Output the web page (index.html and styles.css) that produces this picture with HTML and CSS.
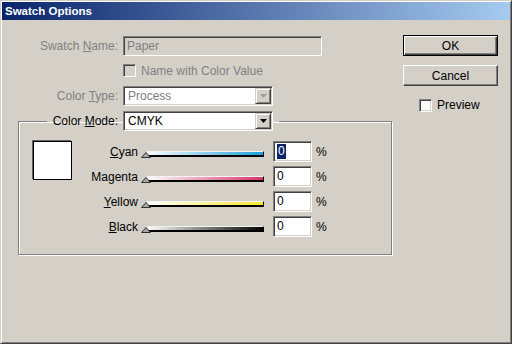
FILE: index.html
```html
<!DOCTYPE html>
<html>
<head>
<meta charset="utf-8">
<link rel="stylesheet" href="styles.css">
</head>
<body>
<div class="window">
  <div class="titlebar">Swatch Options</div>
  <div class="body">
    <div class="form">
      <div class="row r1">
        <label class="lbl dis">Swatch <u>N</u>ame:</label>
        <div class="textbox">Paper</div>
      </div>
      <div class="row r2">
        <span class="chk chk-dis"></span><span class="chk-text dis">Name with Color Value</span>
      </div>
      <div class="row r3">
        <label class="lbl dis">Color <u>T</u>ype:</label>
        <div class="select">
          <span class="val dis">Process</span>
          <span class="dd"><svg width="7" height="4" viewBox="0 0 7 4"><path d="M0 0h7L3.5 4z" fill="#a0a0a0"/></svg></span>
        </div>
      </div>
      <fieldset class="group">
        <legend class="legend">
          <label class="lgl">Color <u>M</u>ode:</label>
          <div class="select">
            <span class="val">CMYK</span>
            <span class="dd"><svg width="7" height="4" viewBox="0 0 7 4"><path d="M0 0h7L3.5 4z" fill="#000"/></svg></span>
          </div>
        </legend>
        <div class="group-body">
          <div class="swatch"></div>
          <div class="sliders">
            <div class="srow">
              <span class="slbl"><u>C</u>yan</span>
              <div class="slider"><div class="bar cyan"></div><svg class="thumb" width="10" height="6" viewBox="0 0 10 6"><path d="M0.5 5.5L5 0.5L9.5 5.5Z" fill="#a8a8a8" stroke="#303030"/></svg></div>
              <div class="num"><span class="sel">0</span></div>
              <span class="pct">%</span>
            </div>
            <div class="srow">
              <span class="slbl">Ma<u>g</u>enta</span>
              <div class="slider"><div class="bar magenta"></div><svg class="thumb" width="10" height="6" viewBox="0 0 10 6"><path d="M0.5 5.5L5 0.5L9.5 5.5Z" fill="#a8a8a8" stroke="#303030"/></svg></div>
              <div class="num">0</div>
              <span class="pct">%</span>
            </div>
            <div class="srow">
              <span class="slbl"><u>Y</u>ellow</span>
              <div class="slider"><div class="bar yellow"></div><svg class="thumb" width="10" height="6" viewBox="0 0 10 6"><path d="M0.5 5.5L5 0.5L9.5 5.5Z" fill="#a8a8a8" stroke="#303030"/></svg></div>
              <div class="num">0</div>
              <span class="pct">%</span>
            </div>
            <div class="srow">
              <span class="slbl"><u>B</u>lack</span>
              <div class="slider"><div class="bar black"></div><svg class="thumb" width="10" height="6" viewBox="0 0 10 6"><path d="M0.5 5.5L5 0.5L9.5 5.5Z" fill="#a8a8a8" stroke="#303030"/></svg></div>
              <div class="num">0</div>
              <span class="pct">%</span>
            </div>
          </div>
        </div>
      </fieldset>
    </div>
    <div class="side">
      <button class="btn btn-default">OK</button>
      <button class="btn btn-cancel">Cancel</button>
      <div class="preview"><span class="chk"></span><span class="chk-text">Preview</span></div>
    </div>
  </div>
</div>
</body>
</html>
```

FILE: styles.css
```css
* { box-sizing: border-box; }
html, body { margin: 0; padding: 0; background: #d4d0c8; }
body { font-family: "Liberation Sans", Arial, sans-serif; font-size: 12px; color: #000; }

.window {
  width: 512px;
  height: 344px;
  background: #d4d0c8;
  border: 1px solid;
  border-color: #d4d0c8 #404040 #404040 #d4d0c8;
  box-shadow: inset 1px 1px 0 #fff, inset -1px -1px 0 #808080;
  padding: 1px;
}

.titlebar {
  height: 18px;
  line-height: 18px;
  padding-left: 3px;
  background: linear-gradient(to right, #0a246a, #a6caf0);
  color: #fff;
  font-weight: bold;
  font-size: 11.5px;
}

.body { display: flex; }
.form { flex: 0 0 396px; padding-top: 16px; }

.row { display: flex; align-items: center; }
.lbl { width: 116px; margin-right: 5px; text-align: right; white-space: nowrap; }
.dis { color: #808080; }

.textbox {
  width: 199px;
  height: 20px;
  line-height: 18px;
  padding-left: 3px;
  color: #808080;
  border: 1px solid;
  border-color: #808080 #fff #fff #808080;
  box-shadow: inset 1px 1px 0 #404040, inset -1px -1px 0 #d4d0c8;
}

.r2 { margin-top: 8px; padding-left: 121px; height: 13px; }
.chk {
  display: inline-block;
  width: 13px;
  height: 13px;
  background: #fff;
  border: 1px solid;
  border-color: #808080 #fff #fff #808080;
  box-shadow: inset 1px 1px 0 #404040, inset -1px -1px 0 #d4d0c8;
}
.chk-dis { background: #d4d0c8; }
.chk-text { margin-left: 5px; }

.r3 { margin-top: 9px; }

.select {
  width: 150px;
  height: 20px;
  display: flex;
  align-items: center;
  justify-content: space-between;
  background: #fff;
  border: 1px solid;
  border-color: #808080 #fff #fff #808080;
  box-shadow: inset 1px 1px 0 #404040, inset -1px -1px 0 #d4d0c8;
  padding: 1px;
}
.val { padding-left: 3px; }
.dd {
  width: 16px;
  height: 16px;
  display: flex;
  align-items: center;
  justify-content: center;
  background: #d4d0c8;
  border: 1px solid;
  border-color: #d4d0c8 #404040 #404040 #d4d0c8;
  box-shadow: inset 1px 1px 0 #fff, inset -1px -1px 0 #808080;
}

.group {
  margin: 5px 0 0 16px;
  width: 374px;
  padding: 0;
  border: 1px solid #808080;
  box-shadow: inset 1px 1px 0 #fff, 1px 1px 0 #fff;
  min-width: 0;
}
.legend {
  margin-left: 28px;
  padding: 0 6px 0 0;
  display: flex;
  align-items: center;
  height: 20px;
}
.lgl { width: 71px; margin-right: 5px; text-align: right; white-space: nowrap; }

.group-body {
  height: 123px;
  display: flex;
  padding: 10px 0 0 14px;
}
.swatch {
  width: 39px;
  height: 39px;
  background: #fff;
  border: 1px solid #000;
  box-shadow: -1px -1px 0 #606060;
}

.sliders { display: flex; flex-direction: column; gap: 4px; }
.srow { display: flex; align-items: center; height: 21px; }
.slbl { width: 66px; text-align: right; }

.slider { position: relative; width: 123px; height: 21px; margin-left: 3px; }
.bar {
  margin: 10px 0 0 6px;
  width: 117px;
  height: 6px;
  border-top: 1px solid #f4f4f4;
  border-bottom: 2px solid #000;
  border-right: 1px solid #000;
}
.cyan { background: linear-gradient(to right, #fff, #1a9fdb); }
.magenta { background: linear-gradient(to right, #fff, #d8336b); }
.yellow { background: linear-gradient(to right, #fff, #f6e530); }
.black { background: linear-gradient(to right, #fff, #000); }
.thumb { position: absolute; left: 0; top: 11px; }

.num {
  width: 39px;
  height: 21px;
  margin-left: 9px;
  line-height: 19px;
  padding-left: 3px;
  background: #fff;
  border: 1px solid;
  border-color: #808080 #fff #fff #808080;
  box-shadow: inset 1px 1px 0 #404040, inset -1px -1px 0 #d4d0c8;
}
.sel { background: #0a246a; color: #fff; display: inline-block; line-height: 15px; padding: 0 1px; }
.pct { margin-left: 4px; }

.side { padding-top: 15px; margin-left: 5px; display: flex; flex-direction: column; align-items: flex-start; }
.btn {
  width: 95px;
  height: 21px;
  font-family: "Liberation Sans", Arial, sans-serif;
  font-size: 12px;
  color: #000;
  background: #d4d0c8;
  padding: 0;
  border: 1px solid;
  border-color: #fff #404040 #404040 #fff;
  box-shadow: inset -1px -1px 0 #808080;
}
.btn-default {
  border-color: #000;
  box-shadow: inset 1px 1px 0 #fff, inset -1px -1px 0 #404040, inset -2px -2px 0 #808080;
}
.btn-cancel { margin-top: 9px; }
.preview { margin-top: 12px; margin-left: 16px; display: flex; align-items: center; }
```
